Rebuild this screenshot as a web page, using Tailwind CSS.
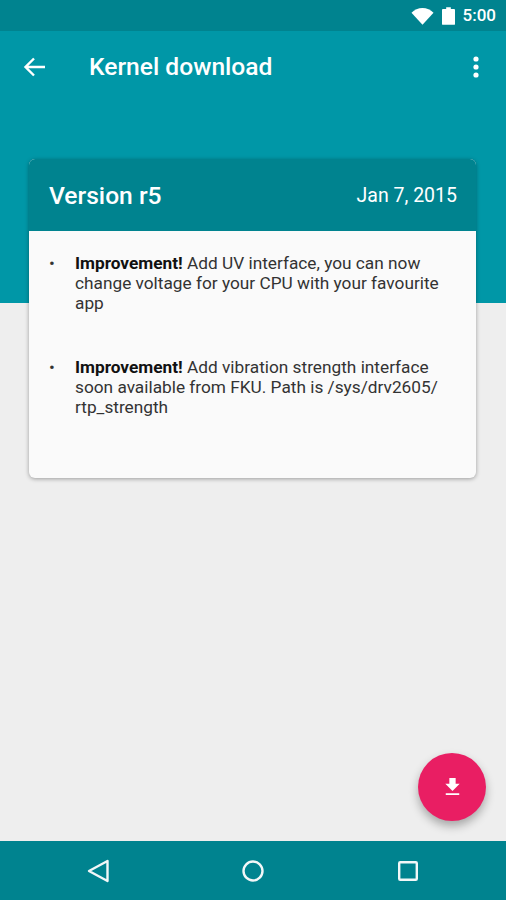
<!DOCTYPE html>
<html>
<head>
<meta charset="utf-8">
<title>Kernel download</title>
<script src="https://cdn.jsdelivr.net/npm/@tailwindcss/browser@4"></script>
</head>
<body class="font-['Roboto',sans-serif]">
<div class="relative flex flex-col h-[900px] w-[506px] overflow-hidden bg-[#eeeeee]">

    <!-- status bar -->
    <div class="flex items-center justify-end h-[31px] bg-[#00838f] pr-[10px] text-white shrink-0">
        <svg class="w-[23px] h-[18px] mr-[8px]" viewBox="0 0 24 18"><path d="M0.5 5.5C3.6 2.6 7.6 0.6 12 0.6s8.4 2 11.5 4.9L12 18z" fill="#fff"/></svg>
        <svg class="w-[13px] h-[18px] mr-[8px]" viewBox="0 0 14 19"><path d="M4.5 0h5v2H13a1 1 0 0 1 1 1v15a1 1 0 0 1-1 1H1a1 1 0 0 1-1-1V3a1 1 0 0 1 1-1h3.5z" fill="#fff"/></svg>
        <span class="text-[17px] font-medium leading-none">5:00</span>
    </div>

    <!-- toolbar -->
    <div class="h-[272px] bg-[#0097a7] shrink-0">
        <div class="flex items-center h-[71px] pl-[23px] pr-[26px] text-white">
            <svg class="w-[22px] h-[20px]" viewBox="0 0 22 20" fill="none" stroke="#fff" stroke-width="2.4"><path d="M22 10H2M11 1.5L2.5 10l8.5 8.5"/></svg>
            <h1 class="ml-[44px] mt-[2px] flex-1 text-[24.6px] font-medium leading-none">Kernel download</h1>
            <svg class="w-[6px] h-[22px] mr-[1px]" viewBox="0 0 6 22" fill="#fff"><circle cx="3" cy="3" r="2.6"/><circle cx="3" cy="11" r="2.6"/><circle cx="3" cy="19" r="2.6"/></svg>
        </div>
    </div>

    <!-- changelog card -->
    <div class="flex-1 pl-[29px] pr-[30px] min-h-0">
        <div class="-mt-[144px] h-[319px] rounded-[6px] overflow-hidden bg-[#fafafa] shadow-[0_1px_4px_rgba(0,0,0,0.35)]">
            <div class="flex items-center justify-between h-[72px] bg-[#00838f] pl-[20px] pr-[19px] pt-[2px] text-white">
                <span class="text-[24.6px] font-medium">Version r5</span>
                <span class="text-[19.5px]">Jan 7, 2015</span>
            </div>
            <ul class="pt-[22px] pl-[20px] pr-[30px] text-[17.25px] leading-[20px] text-[#333333]">
                <li class="flex mb-[44px]">
                    <span class="w-[26px] shrink-0">•</span>
                    <p><b class="font-bold text-[#111111]">Improvement!</b> Add UV interface, you can now change voltage for your CPU with your favourite app</p>
                </li>
                <li class="flex">
                    <span class="w-[26px] shrink-0">•</span>
                    <p><b class="font-bold text-[#111111]">Improvement!</b> Add vibration strength interface soon available from FKU. Path is /sys/drv2605/<br>rtp_strength</p>
                </li>
            </ul>
        </div>
    </div>

    <!-- fab -->
    <button class="absolute left-[418px] top-[753px] flex items-center justify-center w-[68px] h-[68px] rounded-full bg-[#e91e63] shadow-[0_5px_10px_rgba(0,0,0,0.3)]">
        <svg class="w-[15px] h-[18px]" viewBox="0 0 16 20" fill="#fff"><path d="M4.5 0h7v6.5H16L8 14.5 0 6.5h4.5zM0.5 17h15v2h-15z"/></svg>
    </button>

    <!-- nav bar -->
    <div class="flex items-center justify-between h-[59px] bg-[#00838f] pl-[87px] pr-[88px] shrink-0">
        <svg class="w-[22px] h-[24px]" viewBox="0 0 22 24" fill="none" stroke="#f2f7f8" stroke-width="2.4" stroke-linejoin="round"><path d="M20.5 2L2 12l18.5 10z"/></svg>
        <svg class="w-[22px] h-[22px] -ml-[1px]" viewBox="0 0 22 22" fill="none" stroke="#f2f7f8" stroke-width="2.4"><circle cx="11" cy="11" r="9.5"/></svg>
        <svg class="w-[20px] h-[20px]" viewBox="0 0 20 20" fill="none" stroke="#f2f7f8" stroke-width="2.4" stroke-linejoin="round"><rect x="1.2" y="1.2" width="17.6" height="17.6" rx="1"/></svg>
    </div>
</div>
</body>
</html>
